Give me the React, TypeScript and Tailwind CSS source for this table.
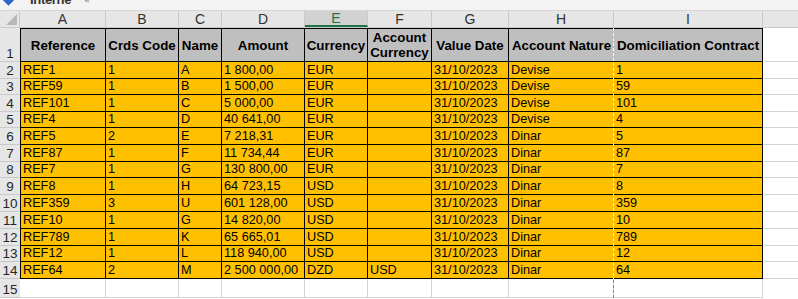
import React from "react";

const rows = [
  ["REF1", "1", "A", "1 800,00", "EUR", "", "31/10/2023", "Devise", "1"],
  ["REF59", "1", "B", "1 500,00", "EUR", "", "31/10/2023", "Devise", "59"],
  ["REF101", "1", "C", "5 000,00", "EUR", "", "31/10/2023", "Devise", "101"],
  ["REF4", "1", "D", "40 641,00", "EUR", "", "31/10/2023", "Devise", "4"],
  ["REF5", "2", "E", "7 218,31", "EUR", "", "31/10/2023", "Dinar", "5"],
  ["REF87", "1", "F", "11 734,44", "EUR", "", "31/10/2023", "Dinar", "87"],
  ["REF7", "1", "G", "130 800,00", "EUR", "", "31/10/2023", "Dinar", "7"],
  ["REF8", "1", "H", "64 723,15", "USD", "", "31/10/2023", "Dinar", "8"],
  ["REF359", "3", "U", "601 128,00", "USD", "", "31/10/2023", "Dinar", "359"],
  ["REF10", "1", "G", "14 820,00", "USD", "", "31/10/2023", "Dinar", "10"],
  ["REF789", "1", "K", "65 665,01", "USD", "", "31/10/2023", "Dinar", "789"],
  ["REF12", "1", "L", "118 940,00", "USD", "", "31/10/2023", "Dinar", "12"],
  ["REF64", "2", "M", "2 500 000,00", "DZD", "USD", "31/10/2023", "Dinar", "64"],
];

const heights = [
  "h-[17px]", "h-[16px]", "h-[17px]", "h-[16px]", "h-[17px]", "h-[17px]", "h-[16px]",
  "h-[17px]", "h-[17px]", "h-[17px]", "h-[17px]", "h-[16px]", "h-[17px]",
];

// column widths, A..I (A carries the left border)
const widths = [
  "w-[86px] border-l",
  "w-[73px]",
  "w-[43px]",
  "w-[83px]",
  "w-[63px]",
  "w-[64px]",
  "w-[77px]",
  "w-[105px] border-r-0",
  "w-[149px]",
];

const letters = ["A", "B", "C", "D", "E", "F", "G", "H", "I"];
const headers = [
  "Reference",
  "Crds Code",
  "Name",
  "Amount",
  "Currency",
  "Account Currency",
  "Value Date",
  "Account Nature",
  "Domiciliation Contract",
];

function RowNum({ n, h }: { n: number; h: string }) {
  return (
    <div
      className={`${h} w-[20px] shrink-0 bg-[#e6e6e6] border-b border-[#c9c9c9] flex items-end justify-center text-[13.5px] leading-none text-[#262626] pb-[1px]`}
    >
      {n}
    </div>
  );
}

export default function App() {
  return (
    <div className="relative w-[798px] h-[299px] overflow-hidden bg-white font-['Liberation_Sans',Arial,sans-serif] text-black">
      {/* clipped ribbon strip */}
      <div className="h-[11px] bg-[#f3f3f3] border-b border-[#d6d6d6] overflow-hidden flex items-start">
        <svg width="30" height="11" viewBox="0 0 30 11" className="shrink-0">
          <rect x="2" y="-10" width="13" height="13" transform="rotate(45 8.5 -3.5)" fill="#2b65c9" />
        </svg>
        <span className="-mt-[10px] text-[13px] font-bold text-[#333] tracking-tight">Interne</span>
        <span className="-mt-[9px] ml-[10px] text-[11px] text-[#888]">✎</span>
      </div>

      {/* column letters */}
      <div className="flex h-[17px] bg-[#e6e6e6] border-b border-[#c9c9c9]">
        <div className="w-[20px] shrink-0 border-r border-[#c9c9c9] relative">
          <div className="absolute right-[2px] bottom-[2px] w-0 h-0 border-l-[11px] border-l-transparent border-b-[11px] border-b-[#b8b8b8]" />
        </div>
        {letters.map((l, i) => {
          const w = widths[i].split(" ")[0];
          const sel = l === "E";
          return (
            <div
              key={l}
              className={`${w} shrink-0 border-r border-[#c9c9c9] flex items-center justify-center text-[14px] leading-none ${
                sel ? "bg-[#d2d2d2] text-[#217346] border-b-2 border-b-[#217346]" : "text-[#333]"
              }`}
            >
              {l}
            </div>
          );
        })}
        <div className="flex-1" />
      </div>

      {/* header row */}
      <div className="flex">
        <RowNum n={1} h="h-[34px]" />
        {headers.map((t, i) => (
          <div
            key={t}
            className={`${widths[i]} h-[34px] shrink-0 bg-[#bfbfbf] border-black border-r border-b border-t flex items-center justify-center text-center text-[13.33px] font-bold leading-[15px]`}
          >
            {t === "Account Currency" ? (
              <span>
                Account
                <br />
                Currency
              </span>
            ) : (
              t
            )}
          </div>
        ))}
        <div className="flex-1 h-[34px] border-b border-[#d4d4d4]" />
      </div>

      {/* data rows */}
      {rows.map((r, ri) => (
        <div key={ri} className="flex">
          <RowNum n={ri + 2} h={heights[ri]} />
          {r.map((v, ci) => (
            <div
              key={ci}
              className={`${widths[ci]} ${heights[ri]} shrink-0 bg-[#ffc000] border-black border-r border-b flex items-end px-[2px] text-[12.7px] leading-none whitespace-nowrap overflow-hidden pb-[1px]`}
            >
              {v}
            </div>
          ))}
          <div className={`flex-1 ${heights[ri]} border-b border-[#d4d4d4]`} />
        </div>
      ))}

      {/* empty row 15 */}
      <div className="flex">
        <RowNum n={15} h="h-[19px]" />
        {widths.map((w, i) => (
          <div
            key={i}
            className={`${w.split(" ")[0]} h-[19px] shrink-0 border-r border-b border-[#d4d4d4]`}
          />
        ))}
      </div>

      {/* page break line */}
      <div className="absolute left-[613px] top-[28px] h-[252px] w-px bg-[repeating-linear-gradient(to_bottom,#f4f4f4_0_3px,transparent_3px_5px)]" />
      <div className="absolute left-[613px] top-[280px] bottom-0 w-px bg-[repeating-linear-gradient(to_bottom,#8a8a8a_0_3px,transparent_3px_5px)]" />
    </div>
  );
}
